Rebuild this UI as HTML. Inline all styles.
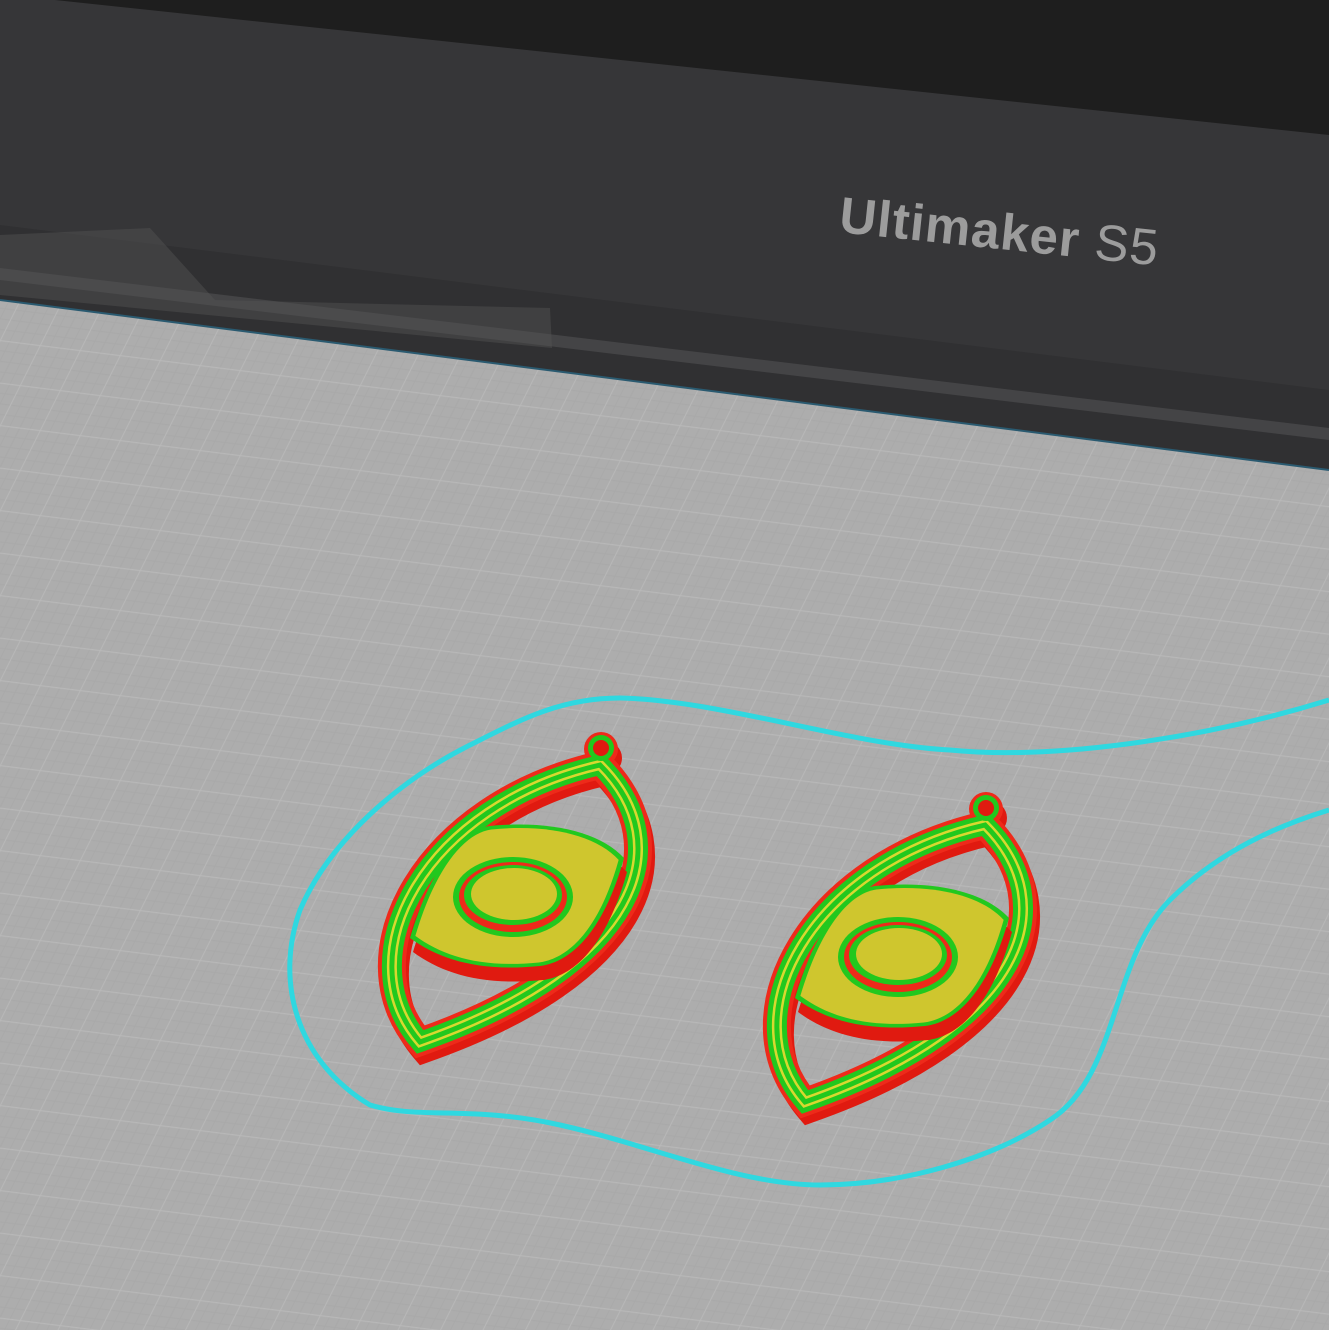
<!DOCTYPE html><html><head><style>html,body{margin:0;padding:0;background:#1e1e1e}svg{display:block}</style></head><body>
<svg width="1329" height="1330" viewBox="0 0 1329 1330" xmlns="http://www.w3.org/2000/svg">
<defs>
<pattern id="g" width="40" height="40" patternUnits="userSpaceOnUse" patternTransform="matrix(1 0.125 -0.5 1 0 0)">
<rect width="40" height="40" fill="#adadad"/>
<path d="M0 10H40M0 20H40M0 30H40M10 0V40M20 0V40M30 0V40" stroke="#a9a9a9" stroke-width="1"/>
<path d="M0 0.5H40M0.5 0V40" stroke="#b8b8b8" stroke-width="1.2"/>
</pattern>
<path id="leaf" d="M600 765 C680 845 640 965 420 1042 C345 955 425 805 600 765Z"/>
<path id="eye" d="M410 938 C430 870 460 830 490 826 C550 820 600 832 624 858 C604 930 572 962 540 966 C480 972 440 960 410 938Z"/>
<g id="ear">
<circle cx="603" cy="753" r="17" fill="#e01a10" transform="translate(2,5)"/>
<use href="#leaf" fill="none" stroke="#e01a10" stroke-width="26" transform="translate(4,8)"/>
<circle cx="601" cy="749" r="17" fill="#ee2a1a"/>
<use href="#leaf" fill="none" stroke="#ee2a1a" stroke-width="28"/>
<use href="#leaf" fill="none" stroke="#22c81e" stroke-width="20"/>
<use href="#leaf" fill="none" stroke="#d8d830" stroke-width="10"/>
<use href="#leaf" fill="none" stroke="#22c81e" stroke-width="5"/>
<circle cx="601" cy="748" r="13" fill="#22c81e"/><circle cx="601" cy="748" r="8" fill="#e01a10"/>
<use href="#eye" fill="#e01a10" transform="translate(3,14)"/>
<use href="#eye" fill="#22c81e"/>
<use href="#eye" fill="#cfc62e" transform="translate(517 895) scale(0.95) translate(-517 -895)"/>
<ellipse cx="513" cy="897" rx="60" ry="40" fill="#22c81e"/>
<ellipse cx="513" cy="897" rx="54" ry="35" fill="#ee2a1a"/>
<ellipse cx="513" cy="895" rx="49" ry="30" fill="#22c81e"/>
<ellipse cx="514" cy="894" rx="43" ry="26" fill="#cfc62e"/>
</g>
</defs>
<rect width="1329" height="1330" fill="#1e1e1e"/>
<polygon points="0,0 55,0 1329,135 1329,470 0,300" fill="#363638"/>
<polygon points="0,225 1329,390 1329,470 0,300" fill="#303032"/>
<polygon points="0,268 1329,428 1329,440 0,280" fill="#444446"/>
<polygon points="0,235 150,228 215,300 550,308 552,348 0,295" fill="#555" opacity="0.45"/>
<text x="838" y="232" transform="rotate(6 838 232)" font-family="Liberation Sans, sans-serif" font-size="51" font-weight="bold" fill="#9c9c9c" letter-spacing="1">Ultimaker <tspan font-weight="normal">S5</tspan></text>
<polygon points="0,300 1329,470 1329,1330 0,1330" fill="url(#g)"/>
<polyline points="0,300 1329,470" stroke="#2a5a70" stroke-width="2" fill="none"/>
<path d="M1329 700 C1200 740 1050 760 950 750 C850 745 720 700 620 698 C560 698 520 720 470 745 C400 780 330 840 300 910 C275 980 295 1060 370 1105 C420 1120 470 1105 560 1125 C650 1145 740 1185 820 1185 C900 1185 990 1160 1050 1120 C1120 1075 1110 960 1170 900 C1220 850 1280 825 1329 810" fill="none" stroke="#2fd8e0" stroke-width="5"/>
<use href="#ear"/>
<use href="#ear" transform="translate(385,60)"/>
</svg>
</body></html>
